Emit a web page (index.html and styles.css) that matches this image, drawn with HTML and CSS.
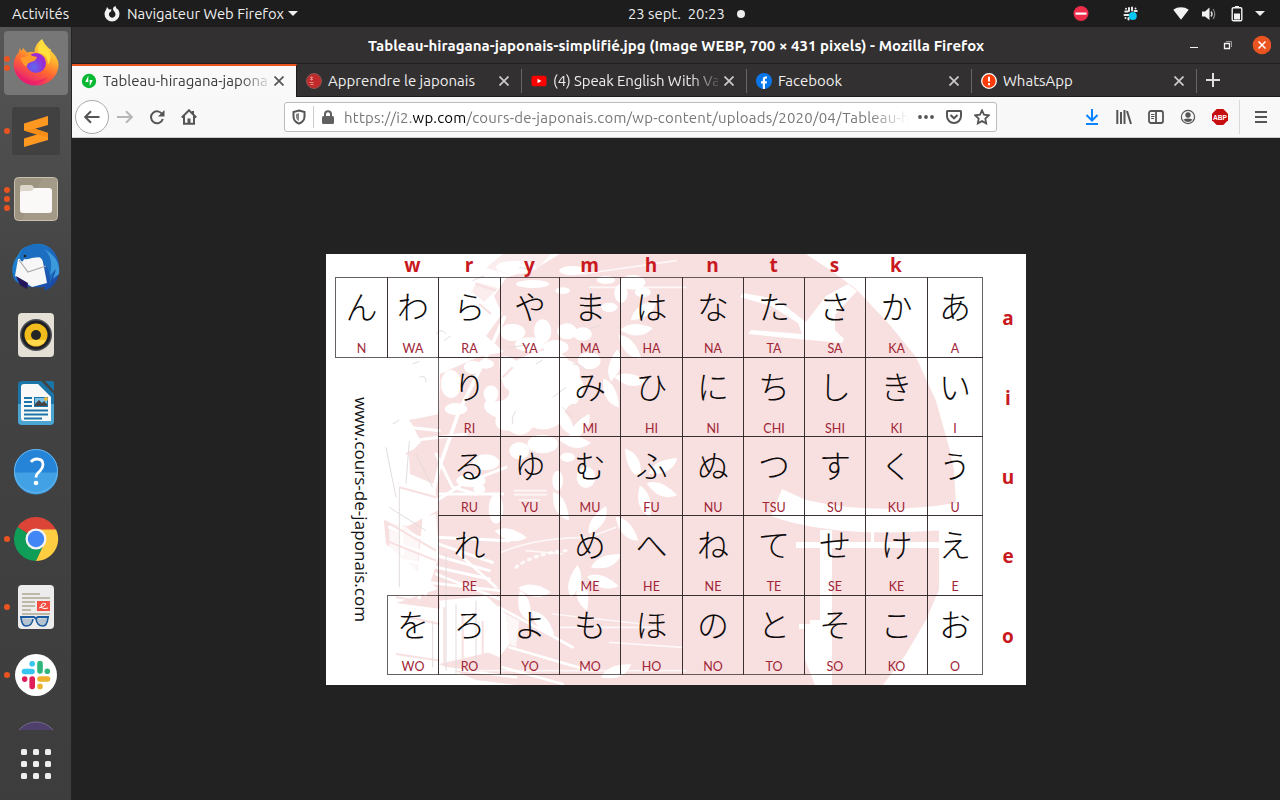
FILE: index.html
```html
<!DOCTYPE html>
<html lang="fr">
<head>
<meta charset="utf-8">
<title>Tableau-hiragana-japonais-simplifié.jpg</title>
<link rel="stylesheet" href="styles.css">
</head>
<body>
<header class="topbar">
  <span class="activities">Activités</span>
  <svg class="appicon" width="16" height="16" viewBox="0 0 16 16"><path d="M3 1 5 3.500 7.500 3.200 7 5.500 5.500 6.500A3.300 3.300 0 1 0 11.200 7C11 5.700 9 5 9 3 9 1.500 10 .5 11.500 0L12.300 2.300C14.500 3.500 15.500 5.500 15.500 8A7.500 7.500 0 0 1 .5 8C.5 5.500 2 4.500 3 1Z" fill="#f2f2f2"/></svg>
  <span class="appname">Navigateur Web Firefox</span>
  <i class="caret"></i>
  <div class="clock"><span class="date">23 sept.&nbsp; 20:23</span><i class="notice"></i></div>
  <div class="tray">
    <svg width="16" height="16" viewBox="0 0 16 16"><circle cx="8" cy="7.500" r="7.500" fill="#ed2c49"/><path d="M2.500 6.500h11v2.200h-11z" fill="#fff"/></svg>
    <svg class="tray-slack" width="16" height="16" viewBox="0 0 16 16"><g stroke="#e7e7e7" stroke-width="2" stroke-linecap="round"><path d="M6 2v3M9 1.500v3M2.200 5.500h2.500M11.500 5h2.300M1.500 9h4M5.500 12v1.500M3 2.700v.1M12.500 2.500v.1M2.500 12v.1"/></g><circle cx="9.800" cy="10" r="4" fill="#08c7f2"/></svg>
    <svg class="tray-wifi" width="16" height="14" viewBox="0 0 16 14"><path d="M.3 2.800C4.500-.5 11.500-.5 15.700 2.800L8 12.700Z" fill="#f2f2f2"/></svg>
    <svg class="tray-sound" width="16" height="16" viewBox="0 0 16 16"><path d="M1 5.500h3L8.500 1.500v12.500L4 10.500H1z" fill="#f2f2f2"/><path d="M10 5.500q2 2.500 0 5" stroke="#ddd" stroke-width="1.400" fill="none"/><path d="M12 3q3.500 5 0 10" stroke="#888" stroke-width="1.200" fill="none"/></svg>
    <svg class="tray-battery" width="12" height="16" viewBox="0 0 12 16"><path d="M4 0h4v2H4z" fill="#f2f2f2"/><rect x="1.200" y="1.700" width="9.600" height="13" rx="1.200" fill="none" stroke="#f2f2f2" stroke-width="1.400"/><path d="M3 7.500h6v6H3z" fill="#f2f2f2"/></svg>
    <i class="caret tray-caret"></i>
  </div>
</header>
<div class="desktop">
<nav class="dock">
  <div class="apps">
    <div class="app current"><span class="run"><i></i><i></i></span>
      <svg width="48" height="48" viewBox="-24 -24 48 48"><defs>
        <linearGradient id="ff" x1=".8" y1="0" x2=".3" y2="1"><stop offset="0" stop-color="#fff44f"/><stop offset=".35" stop-color="#ffb02e"/><stop offset=".62" stop-color="#ff6432"/><stop offset="1" stop-color="#e3177d"/></linearGradient>
        <radialGradient id="ffb" cx=".4" cy=".7"><stop offset="0" stop-color="#5b6cf2"/><stop offset="1" stop-color="#9a2bd4"/></radialGradient></defs>
        <path d="M-13-15-9-10.500Q-4-12-1.500-10.500-2-18 6-24 8-19 13.500-14 15-15 15-12 22.500-5 22.500 2A22.400 20.500 0 0 1-22.400 2Q-22.500-5-17-11L-16.500-15-14.500-12Z" fill="url(#ff)"/>
        <circle cx="0" cy="0" r="10" fill="url(#ffb)"/>
        <path d="M-16-5Q-10-6-7-9-3-6 1-6 0-2-5-1-9 0-9.500 4-13 2-16-5Z" fill="#ff9a2a"/><path d="M3-10Q12-9 12 2 17-6 12-14 8-17 6-22-1-14 3-10Z" fill="#ffdf3e"/><path d="M-21 6Q-8 25 12 14 3 24-10 20-19 15-21 6Z" fill="#ed1c6b" opacity=".7"/></svg></div>
    <div class="app"><span class="run"><i></i></span>
      <svg width="48" height="48" viewBox="-24 -24 48 48"><rect x="-24" y="-24" width="48" height="48" rx="3" fill="#414141"/><path d="M-12-7.500 12-15V-6L-1-2.200 12 2V9L-12 16V7.500L1 3.500-12-.5Z" fill="#ff9820"/><path d="M-1-2.200 12 2V6L1 3.500-12-.5Z" fill="#f58c18"/></svg></div>
    <div class="app"><span class="run"><i></i><i></i><i></i></span>
      <svg width="48" height="48" viewBox="-24 -24 48 48"><rect x="-21.500" y="-21.500" width="43" height="43" rx="4" fill="#9c9480" stroke="#c8c1b0"/><path d="M21-21H6L-14 21H17Q21 21 21 17Z" fill="#a69e8b" opacity=".7"/><rect x="-16" y="-11" width="32" height="25" rx="3" fill="#faf9f7"/><path d="M-16-8v-4q0-2 2-2h9q2 0 3 3-1 3-5 3h-6q-3 0-3 2z" fill="#dcd6ca"/></svg></div>
    <div class="app">
      <svg width="48" height="48" viewBox="-24 -24 48 48"><defs><linearGradient id="tb" x1="0" y1="0" x2="1" y2="1"><stop offset="0" stop-color="#1e94df"/><stop offset="1" stop-color="#1b3e9c"/></linearGradient></defs><path d="M-7-21Q0-25 9-22 17-19 21-10 26 2 21 13 17 21 8 24L9 20Q-15 22-22 12-27 0-18-12Q-15-20-7-21Z" fill="url(#tb)"/><path d="M-18-8 6-10 11 16-4 20-21 9Z" fill="#f7f7f8"/><path d="M-17-7-8 5 10-1" fill="none" stroke="#aaa" stroke-width="1.200"/><path d="M-16-8Q-18-18-6-22 5-25 14-17 20-8 17 8L13 18Q16 4 7-6 3-13-4-9-10-7-12-8-14-3-16-8Z" fill="#1c6fc0"/><path d="M8-18Q18-10 14 8L20 2 17 12 23 7Q25-9 8-18Z" fill="#3c9ada"/><circle cx="-11" cy="-11" r="1.300" fill="#222"/><path d="M-20 9-8 16-9 22-16 18Z" fill="#23165b"/></svg></div>
    <div class="app">
      <svg width="48" height="48" viewBox="-24 -24 48 48"><rect x="-18" y="-22" width="36" height="44" rx="4" fill="#e5e0d5"/><circle r="16" fill="#4e5056"/><circle r="14.500" fill="#202126"/><circle r="11.500" fill="#f2bd1c"/><path d="M-10 5A11.500 11.500 0 0 0 10 5Z" fill="#ffd94b"/><circle r="5" fill="#252525"/></svg></div>
    <div class="app">
      <svg width="48" height="48" viewBox="-24 -24 48 48"><path d="M-14-22H5L18-9V18Q18 22 14 22H-14Q-18 22-18 18V-18Q-18-22-14-22Z" fill="#1b75a8"/><path d="M-18 1H18V18Q18 22 14 22H-14Q-18 22-18 18Z" fill="#4aa5d3"/><path d="M9-22H16Q18-22 18-20V-12Z" fill="#1b75a8"/><path d="M-12-19H2L15-6V18H-12Q-15 18-15 15V-16Q-15-19-12-19Z" fill="#f8f8f8"/><path d="M-12-5h8M-12-1h8M-12 3h8M-12 7.500h24M-12 11.500h24M-12 15.500h18" stroke="#1c75a8" stroke-width="1.800"/><path d="M-2-6h14v10H-2z" fill="#1c75a8"/><path d="M-1-5h12v8H-1z" fill="#7dc1e4"/><path d="M-1 3V1l4-4 3 3 2-2 3 3v2z" fill="#444"/><circle cx="10" cy="-4" r="2" fill="#e6bd42"/></svg></div>
    <div class="app">
      <svg width="48" height="48" viewBox="-24 -24 48 48"><circle r="22" fill="#2584d8"/><path d="M-22 1.500H22A22 22 0 0 1-22 1.500Z" fill="#42a0e4"/><circle r="21.500" fill="none" stroke="#65b6ef"/><path d="M-5-9Q-3-12 1-12 7-12 7-6.500 7-3 4 0 0 3 0 6.500" fill="none" stroke="#fff" stroke-width="2.800"/><circle cy="12" r="2.300" fill="#fff"/></svg></div>
    <div class="app"><span class="run"><i></i></span>
      <svg width="48" height="48" viewBox="-24 -24 48 48"><path d="M0 0-18.500-12A22 22 0 0 1 20-9L21-5Z" fill="#dc4437"/><path d="M-18.500-12A22 22 0 0 0 0 22L8 5Z" fill="#109d58"/><path d="M0 22A22 22 0 0 0 20-9.500H0L8 5Z" fill="#ffcd42"/><circle r="10.500" fill="#f3f3f5"/><circle r="8.200" fill="#4285f4"/></svg></div>
    <div class="app"><span class="run"><i></i></span>
      <svg width="48" height="48" viewBox="-24 -24 48 48"><rect x="-18" y="-22" width="36" height="44" rx="4" fill="#ececec"/><path d="M-14-13H4M-14-9H14M-14-5H-1M-14-1H-1M-14 3H-5M-14 7H14" stroke="#bdb8a8" stroke-width="1.900"/><path d="M1-6h13V4H1z" fill="#f44e42"/><path d="M3 1Q9 0 10-3 7-5 5-2 5 3 12 1" stroke="#fff" fill="none"/><path d="M-16 10H-2Q0 12 2 10H13" fill="none" stroke="#1b5a9e" stroke-width="2"/><path d="M-15 11Q-14 19-10 19-4 19-3 12M12 11Q11 19 7 19 1 19 0 12" fill="#b4c3cf" stroke="#1b5a9e" stroke-width="1.600"/></svg></div>
    <div class="app"><span class="run"><i></i></span>
      <svg width="48" height="48" viewBox="-24 -24 48 48"><circle r="21" fill="#fff"/><g stroke-width="5.600" stroke-linecap="round" fill="none"><path d="M-11.500-3.500H-4M-3.800-11.300v.1" stroke="#36c5f0"/><path d="M4-11.500V-4M11.300-3.800v.1" stroke="#2eb67d"/><path d="M11.500 4H4M4 11.300v.1" stroke="#ecb22e"/><path d="M-3.800 11.500V4M-11.300 4v.1" stroke="#e01e5a"/></g></svg></div>
    <div class="app">
      <svg width="48" height="48" viewBox="-24 -24 48 48"><circle cy="1" r="22" fill="#4f3f6c" stroke="#77698c"/></svg></div>
  </div>
  <div class="launcher"><i></i><i></i><i></i><i></i><i></i><i></i><i></i><i></i><i></i></div>
</nav>
<main class="window">
  <div class="titlebar"><span class="title">Tableau-hiragana-japonais-simplifié.jpg (Image WEBP, 700 × 431 pixels) - Mozilla Firefox</span>
    <svg class="controls" width="90" height="20" viewBox="0 0 90 20"><path d="M9 12.500h8" stroke="#f4f4f4"/><path d="M43.500 8.500h5v5h-5z" fill="none" stroke="#f4f4f4" stroke-width="1.300"/><path d="M45 6.500h5.500V12" fill="none" stroke="#999"/><circle cx="81" cy="10" r="9.300" fill="#e95420"/><path d="m77.500 6.500 7 7m0-7-7 7" stroke="#fff" stroke-width="1.500"/></svg>
  </div>
  <div class="tabs">
    <div class="tab active"><svg class="fav" width="16" height="16" viewBox="0 0 16 16"><circle cx="8" cy="8" r="7.200" fill="#07b932"/><path d="M7.300 2.800V9H4.200ZM8.700 13.200V7h3.100Z" fill="#fff"/></svg><span class="label t1">Tableau-hiragana-japonais</span><svg class="close" width="10" height="10"><path d="m.5.5 9 9m0-9-9 9"/></svg></div>
    <div class="tab"><svg class="fav" width="16" height="16" viewBox="0 0 16 16"><circle cx="8" cy="8" r="7.500" fill="#c02a2b" stroke="#855"/><path d="M4 4.500h3m-3 2h3M5.500 3.500v4m-2 2h4m-3 2h3" stroke="#e58a85"/></svg><span class="label t2">Apprendre le japonais</span><svg class="close" width="10" height="10"><path d="m.5.5 9 9m0-9-9 9"/></svg></div>
    <div class="tab"><svg class="fav" width="16" height="16" viewBox="0 0 16 16"><rect x=".5" y="2.700" width="15" height="10.600" rx="2.500" fill="#f00"/><path d="M6.500 5.800v4.400l4-2.200z" fill="#fff"/></svg><span class="label t3">(4) Speak English With Vanessa</span><svg class="close" width="10" height="10"><path d="m.5.5 9 9m0-9-9 9"/></svg></div>
    <div class="tab"><svg class="fav" width="16" height="16" viewBox="0 0 16 16"><circle cx="8" cy="8" r="8" fill="#0877ea"/><path d="M6.800 16v-5.500H5V8.200h1.800V6.500C6.800 4.300 8 3.500 9.600 3.500l1.400.1v2h-.9C9.200 5.600 9 6.100 9 6.700v1.500h2l-.4 2.300H9V16Z" fill="#fff"/></svg><span class="label t4">Facebook</span><svg class="close" width="10" height="10"><path d="m.5.5 9 9m0-9-9 9"/></svg></div>
    <div class="tab"><svg class="fav" width="16" height="16" viewBox="0 0 16 16"><circle cx="8" cy="8" r="7.300" fill="#ff3b08" stroke="#fff" stroke-width="1.300"/><path d="M8 3.700v4.800m0 1.500v2.200" stroke="#fff" stroke-width="2"/></svg><span class="label t5">WhatsApp</span><svg class="close" width="10" height="10"><path d="m.5.5 9 9m0-9-9 9"/></svg></div>
    <svg class="newtab" width="14" height="14"><path d="M7 0v14M0 7h14" stroke="#e0e0e0" stroke-width="2"/></svg>
  </div>
  <div class="toolbar">
    <span class="back"><svg width="16" height="16" viewBox="0 0 16 16"><path d="M15.500 8H1.500M7 2.200 1.200 8 7 13.800" class="ln"/></svg></span>
    <svg class="forward" width="16" height="16" viewBox="0 0 16 16"><path d="M0 8h14.500M9 2.200 14.800 8 9 13.800" class="ln"/></svg>
    <svg class="reload" width="16" height="16" viewBox="0 0 16 16"><path d="M13.300 5.400A6 6 0 1 0 13.800 10" class="ln"/><path d="M15.500 1v6.500H9Z" fill="#555"/></svg>
    <svg class="home" width="16" height="16" viewBox="0 0 16 16"><path d="M.8 8.500 8 1.300l7.200 7.200M3 7v7.800h10V7M12 2v3" class="ln"/><path d="M6.500 14.500V9.500h3v5" fill="#555"/></svg>
    <div class="urlbar">
      <svg class="shield" width="14" height="16" viewBox="0 0 14 16"><path d="M7 1.500 12.500 3v4.500Q12.500 12.500 7 14.600 1.500 12.500 1.500 7.500V3Z" class="ln"/><path d="M7 4v8Q4 10.500 4 7.500V5Z" fill="#666" opacity=".8"/></svg>
      <i class="rule"></i>
      <svg class="lock" width="12" height="14" viewBox="0 0 12 14"><path d="M3 7V4.200a3 3 0 0 1 6 0V7" fill="none" stroke="#606060" stroke-width="2"/><rect y="6" width="12" height="8" rx="1.500" fill="#606060"/></svg>
      <span class="url">https://i2.<b>wp.com</b>/cours-de-japonais.com/wp-content/uploads/2020/04/Tableau-hiragana</span>
      <svg class="dots" width="16" height="4"><circle cx="2" cy="2" r="1.900"/><circle cx="8" cy="2" r="1.900"/><circle cx="14" cy="2" r="1.900"/></svg>
      <svg class="pocket" width="16" height="16" viewBox="0 0 16 16"><path d="M1.500 2h13q.5 0 .5.500V7a7 7 0 0 1-14 0V2.500Q1 2 1.500 2ZM4.500 6 8 9.300 11.500 6" class="ln"/></svg>
      <svg class="star" width="16" height="16" viewBox="0 0 16 16"><path d="m8 1.400 2 4.300 4.800.6-3.500 3.300.9 4.800L8 12.100l-4.200 2.300.9-4.800L1.200 6.300 6 5.700Z" class="ln thin"/></svg>
    </div>
    <div class="actions">
      <svg width="16" height="16" viewBox="0 0 16 16"><path d="M8 0v11M2.500 6 8 11.500 13.500 6M2 15h12" class="ln blue"/></svg>
      <svg width="16" height="16" viewBox="0 0 16 16"><path d="M1.300 1v14M5 3v12M8.500 1v14M11 2l4 13" class="ln"/></svg>
      <svg width="16" height="16" viewBox="0 0 16 16"><rect x="1" y="2" width="14" height="12" rx="2" class="ln thin"/><path d="M8 2v12" class="ln thin"/><path d="M3 5.500h3.500M3 7.500h3.500M3 9.500h3" stroke="#555" fill="none"/></svg>
      <svg width="16" height="16" viewBox="0 0 16 16"><circle cx="8" cy="8" r="6.600" fill="none" stroke="#555" stroke-width="1.200"/><circle cx="8" cy="6" r="2.700" fill="#555"/><path d="M3.500 10.500Q8 8.500 12.500 10.500 11 13 8 13T3.500 10.500Z" fill="#555"/></svg>
      <svg width="16" height="16" viewBox="0 0 16 16"><path d="M4.700 0h6.600L16 4.700v6.600L11.300 16H4.700L0 11.300V4.700Z" fill="#c70d10"/><text x="8" y="11" class="abp" textLength="14" lengthAdjust="spacingAndGlyphs">ABP</text></svg>
      <i class="rule tall"></i>
      <svg class="menu" width="12" height="12"><path d="M0 1h12M0 6h12M0 11h12" class="ln"/></svg>
    </div>
  </div>
  <section class="viewer">
    <div class="picture">
      <svg class="art" width="700" height="431" viewBox="0 0 700 431">
        <defs><path id="leaf" d="M-16 0Q-5-11 17-2 4 12-16 0Z"/></defs>
        <path d="M234 0H480L507 18 530 35 563 70 590 103 610 147 623 193 628 216 630 250 613 253V336L600 366 580 400 557 431H190L150 426 113 410 178 395 160 350 115 355 70 349 112 335 85 312 60 290 58 268 82 272 113 256 108 230 84 220 83 200 95 188 84 166 113 160 114 120 152 103 178 98 160 82 176 60 168 42 180 24 214 12Z" fill="#f8dfe0"/>
        <path d="M177 0H225L210 16 190 9 182 20 160 14ZM150 28 172 34 158 48 146 38Z" fill="#fbeced"/>
        <g fill="#fff">
          <path d="M480 68 500 42 522 30 531 37 509 61 509 76 518 85 516 89 472 85 422 80 425 76 476 80 472 69 445 52 414 43 417 39 450 45Z"/>
          <path d="M456 235 480 246Q550 262 630 249V275Q510 286 445 262Z"/>
          <path d="M494 276h12v155h-17l-11-28v-28h-5v-5h11v-4h10zM470 288h144v6H470zM545 266h3v24h-3z"/>
        </g>
        <g transform="translate(50) scale(.3333)">
          <g fill="#fff">
            <path d="M370 310Q400 300 420 320L460 300Q540 270 580 320 620 330 610 370 640 400 600 450 570 445 560 500 520 540 470 520 440 560 400 530 350 530 360 490 310 470 330 440 400 450 400 410 370 400 370 310Z"/>
            <ellipse cx="500" cy="232" rx="26" ry="36"/><ellipse cx="573" cy="232" rx="30" ry="24"/><ellipse cx="620" cy="240" rx="28" ry="20"/><ellipse cx="462" cy="272" rx="45" ry="22"/><ellipse cx="540" cy="280" rx="38" ry="22"/><ellipse cx="640" cy="320" rx="34" ry="26"/>
            <ellipse cx="330" cy="330" rx="24" ry="14"/><ellipse cx="398" cy="372" rx="22" ry="18"/><ellipse cx="345" cy="420" rx="22" ry="26"/><ellipse cx="225" cy="390" rx="30" ry="42"/><ellipse cx="290" cy="340" rx="26" ry="20"/><ellipse cx="240" cy="465" rx="34" ry="18"/>
            <ellipse cx="770" cy="85" rx="38" ry="22"/><ellipse cx="735" cy="118" rx="20" ry="28"/><ellipse cx="800" cy="115" rx="24" ry="15"/><ellipse cx="690" cy="78" rx="28" ry="12"/><ellipse cx="700" cy="160" rx="24" ry="14"/><ellipse cx="470" cy="90" rx="50" ry="12"/><ellipse cx="590" cy="50" rx="40" ry="14"/><ellipse cx="420" cy="40" rx="60" ry="20"/><ellipse cx="410" cy="235" rx="38" ry="26"/><ellipse cx="560" cy="110" rx="22" ry="10"/>
            <ellipse cx="330" cy="625" rx="40" ry="24"/><ellipse cx="285" cy="680" rx="44" ry="20"/><ellipse cx="500" cy="570" rx="46" ry="28"/><ellipse cx="430" cy="590" rx="30" ry="26"/><ellipse cx="360" cy="765" rx="22" ry="44"/><ellipse cx="310" cy="705" rx="18" ry="14"/><ellipse cx="545" cy="680" rx="16" ry="30"/><ellipse cx="630" cy="670" rx="28" ry="32"/><ellipse cx="575" cy="610" rx="22" ry="14"/>
            <path d="M190 1040 330 1025 390 1080 400 1170 370 1210 300 1180 210 1200ZM140 790 180 780 190 900 150 1030 120 1000Z"/>
            <path d="M390 1080 430 1100 420 1180 400 1170ZM40 780 130 850 120 1010 40 890Z" opacity=".75"/>
          </g>
          <g stroke="#fff" fill="none" stroke-linecap="round">
            <path d="M385 190 340 290 250 470 190 640 150 800 130 1030" stroke-width="11"/>
            <path d="M30 560 100 680 150 760 260 690 390 640M60 640 80 900M180 600 230 700 300 720" stroke-width="9"/>
            <path d="M40 820 350 925M60 870 340 950M90 920 340 975M110 980 370 1010M190 720 380 720M100 520 190 530M105 560 270 540M180 850 400 860" stroke-width="9"/>
            <path d="M180 960 370 1035M250 900 360 1000M370 1060 590 1180M400 1180 640 1250M190 1240 420 1270M380 1240 560 1290" stroke-width="8"/>
            <path d="M376 895Q480 850 640 850L720 820M530 1080 800 1110M550 1120H850M700 1165 920 1180M640 100H930M620 60 900 20M450 890 560 900M415 710H510M415 722H512M430 738H490M290 1250H930" stroke-width="5" opacity=".75"/>
            <path d="M420 940Q470 900 570 890" stroke-width="10" stroke-dasharray="6 16" opacity=".8"/>
          </g>
          <g stroke="#f8dfe0" fill="none" stroke-width="6">
            <path d="M100 500H190M90 600 180 560M70 700 180 730M25 800 180 890M30 860 180 920M60 1030 190 1050M100 1090 190 1110M60 1200 190 1220M205 1060V1230M260 1080V1240M320 1100V1240M410 340 380 370M300 90 360 110M310 150 345 180"/>
          </g>
          <g stroke="#e3dcdd" fill="none" stroke-width="3">
            <path d="M130 370q20-10 20 15M180 240q15-20 30 0M205 260l20-15M100 560 90 690M30 580 60 730M120 600 170 700M40 760 150 830M70 700V1000M210 900V1250M240 1050V1260M300 1040V1250M170 1100V1240M400 280l60-8M420 470q-15 20-10 40M530 430l40-30M590 330q30 0 40 20M480 330l20-12M560 460l30 30M640 225l30-10M290 80l35-15M110 330l20-8M50 510l20-12M430 40l40 8"/>
          </g>
        </g>
        <g fill="#fff">
          <use href="#leaf" transform="translate(310 76)"/><use href="#leaf" transform="translate(318 57) rotate(-35)"/><use href="#leaf" transform="translate(303 93) rotate(50)"/><use href="#leaf" transform="translate(289 112) rotate(-75)"/><use href="#leaf" transform="translate(304 126) rotate(10)"/><use href="#leaf" transform="translate(284 139) rotate(65)"/><use href="#leaf" transform="translate(239 168) rotate(60)"/><use href="#leaf" transform="translate(254 174) rotate(-50)"/><use href="#leaf" transform="translate(248 188) rotate(10)"/><use href="#leaf" transform="translate(308 209) rotate(-115)"/><use href="#leaf" transform="translate(337 213) rotate(-25)"/><use href="#leaf" transform="translate(335 236) rotate(25)"/><use href="#leaf" transform="translate(318 247) rotate(75)"/><use href="#leaf" transform="translate(300 275) rotate(50)"/><use href="#leaf" transform="translate(272 267) rotate(-55)"/><use href="#leaf" transform="translate(280 308) rotate(-20)"/><use href="#leaf" transform="translate(276 328) rotate(20)"/><use href="#leaf" transform="translate(249 328) rotate(-75)"/><use href="#leaf" transform="translate(256 340) rotate(80)"/><use href="#leaf" transform="translate(184 281) rotate(15)"/><use href="#leaf" transform="translate(208 337) rotate(10)"/><use href="#leaf" transform="translate(198 352) rotate(75)"/><use href="#leaf" transform="translate(234 252) rotate(65)"/><use href="#leaf" transform="translate(216 369) rotate(50)"/><use href="#leaf" transform="translate(290 418) rotate(-20)"/>
        </g>
      </svg>
      <div class="heads"><span></span><span>w</span><span>r</span><span>y</span><span>m</span><span>h</span><span>n</span><span>t</span><span>s</span><span>k</span><span></span></div>
      <div class="kana">
        <div class="cell"><b>ん</b><em>N</em></div><div class="cell"><b>わ</b><em>WA</em></div><div class="cell"><b>ら</b><em>RA</em></div><div class="cell"><b>や</b><em>YA</em></div><div class="cell"><b>ま</b><em>MA</em></div><div class="cell"><b>は</b><em>HA</em></div><div class="cell"><b>な</b><em>NA</em></div><div class="cell"><b>た</b><em>TA</em></div><div class="cell"><b>さ</b><em>SA</em></div><div class="cell"><b>か</b><em>KA</em></div><div class="cell"><b>あ</b><em>A</em></div>
        <div class="site">www.cours-de-japonais.com</div><div class="gap"></div><div class="cell"><b>り</b><em>RI</em></div><div class="cell"></div><div class="cell"><b>み</b><em>MI</em></div><div class="cell"><b>ひ</b><em>HI</em></div><div class="cell"><b>に</b><em>NI</em></div><div class="cell"><b>ち</b><em>CHI</em></div><div class="cell"><b>し</b><em>SHI</em></div><div class="cell"><b>き</b><em>KI</em></div><div class="cell"><b>い</b><em>I</em></div>
        <div class="cell"><b>る</b><em>RU</em></div><div class="cell"><b>ゆ</b><em>YU</em></div><div class="cell"><b>む</b><em>MU</em></div><div class="cell"><b>ふ</b><em>FU</em></div><div class="cell"><b>ぬ</b><em>NU</em></div><div class="cell"><b>つ</b><em>TSU</em></div><div class="cell"><b>す</b><em>SU</em></div><div class="cell"><b>く</b><em>KU</em></div><div class="cell"><b>う</b><em>U</em></div>
        <div class="cell"><b>れ</b><em>RE</em></div><div class="cell"></div><div class="cell"><b>め</b><em>ME</em></div><div class="cell"><b>へ</b><em>HE</em></div><div class="cell"><b>ね</b><em>NE</em></div><div class="cell"><b>て</b><em>TE</em></div><div class="cell"><b>せ</b><em>SE</em></div><div class="cell"><b>け</b><em>KE</em></div><div class="cell"><b>え</b><em>E</em></div>
        <div class="cell"><b>を</b><em>WO</em></div><div class="cell"><b>ろ</b><em>RO</em></div><div class="cell"><b>よ</b><em>YO</em></div><div class="cell"><b>も</b><em>MO</em></div><div class="cell"><b>ほ</b><em>HO</em></div><div class="cell"><b>の</b><em>NO</em></div><div class="cell"><b>と</b><em>TO</em></div><div class="cell"><b>そ</b><em>SO</em></div><div class="cell"><b>こ</b><em>KO</em></div><div class="cell"><b>お</b><em>O</em></div>
      </div>
      <div class="vowels"><span>a</span><span>i</span><span>u</span><span>e</span><span>o</span></div>
    </div>
  </section>
</main>
</div>
</body>
</html>
```
FILE: styles.css
```css
* { box-sizing: border-box; }
body { margin: 0; width: 1280px; height: 800px; overflow: hidden; display: flex; flex-direction: column; font: 15px/20px Ubuntu, "Noto Sans", sans-serif; background: #222; color: #eee; }
svg { display: block; flex: none; }
i { display: block; flex: none; }
span { white-space: nowrap; }
.topbar { flex: none; height: 27px; background: #1d1d1d; display: flex; align-items: center; padding-left: 12px; font-size: 14.8px; }
.activities { width: 92px; }
.appicon { margin-right: 7px; }
.appname { width: 161px; }
.caret { width: 0; height: 0; border: 5px solid transparent; border-top-color: #eee; border-bottom: 0; }
.clock { display: flex; align-items: center; margin-left: 330px; width: 117px; }
.date { width: 109px; }
.notice { width: 8px; height: 8px; border-radius: 50%; background: #eee; }
.tray { display: flex; align-items: center; margin-left: 328px; }
.tray-slack { margin-left: 34px; }
.tray-wifi { margin-left: 34px; }
.tray-sound { margin-left: 12px; }
.tray-battery { margin-left: 14px; }
.tray-caret { margin-left: 12px; }

.desktop { display: flex; flex: 1; min-height: 0; }
.dock { width: 72px; flex: none; background: linear-gradient(#565656, #434343 35%, #3d3d3d); border-right: 1px solid #242424; }
.apps { height: 703px; overflow: hidden; padding-top: 2px; }
.app { height: 64px; width: 64px; margin: 2px 4px 4px; display: flex; align-items: center; justify-content: center; position: relative; border-radius: 4px; }
.current { background: #777; }
.run { position: absolute; left: 0; top: 0; height: 64px; display: flex; flex-direction: column; justify-content: center; gap: 3px; }
.run i { width: 6px; height: 6px; border-radius: 50%; background: #e95420; }
.launcher { display: grid; grid-template-columns: repeat(3, 6px); gap: 6px; margin: 19px 0 0 21px; }
.launcher i { width: 6px; height: 6px; border-radius: 1.5px; background: #eee; }

.window { flex: 1; min-width: 0; display: flex; flex-direction: column; }
.titlebar { height: 37px; background: #333031; border-bottom: 1px solid #211f20; display: flex; align-items: center; }
.title { width: 616px; margin-left: 296px; padding-top: 2px; font-weight: 700; letter-spacing: .035px; color: #fff; }
.controls { margin-left: 197px; }
.tabs { height: 33px; background: #333031; display: flex; align-items: stretch; border-bottom: 1px solid #1d1b1c; }
.tab { width: 225px; display: flex; align-items: center; padding: 2px 12px 0 9px; position: relative; }
.tab:not(.active)::after { content: ""; position: absolute; right: 0; top: 5px; height: 24px; width: 1px; background: #666; }
.active { background: #f9f9fa; color: #3b3b3b; border-top: 2px solid #e95420; border-right: 1px solid #1d1b1c; margin-bottom: -1px; padding: 0 11px 1px 9px; }
.label { width: 165px; margin: 0 6px; overflow: hidden; flex: none; }
.t1, .t3 { -webkit-mask-image: linear-gradient(90deg, #000 83%, transparent 103%); mask-image: linear-gradient(90deg, #000 83%, transparent 103%); }
.t3 { letter-spacing: -.1px; }
.close path { stroke: #ccc; stroke-width: 1.7; }
.active .close path { stroke: #555; }
.newtab { margin: 9px 0 0 9px; }
.toolbar { height: 41px; background: #f8f8f8; border-bottom: 1px solid #ccc; display: flex; align-items: center; padding-left: 3px; }
.ln { stroke: #555; stroke-width: 2; fill: none; }
.thin { stroke-width: 1.8; }
.blue { stroke: #0a84ff; }
.back { width: 34px; height: 34px; border: 1px solid #aaa; border-radius: 50%; background: #fff; display: flex; align-items: center; justify-content: center; }
.forward { margin-left: 8px; opacity: .4; }
.reload, .home { margin-left: 16px; }
.urlbar { width: 713px; height: 30px; margin-left: 87px; border: 1px solid #bcbcbc; border-radius: 3px; background: #fff; display: flex; align-items: center; }
.shield { margin-left: 7px; }
.rule { width: 1px; height: 22px; background: #ccc; margin-left: 7px; }
.lock { margin-left: 8px; }
.url { width: 565px; margin: 1px 0 0 10px; overflow: hidden; letter-spacing: .22px; color: #777; -webkit-mask-image: linear-gradient(90deg, #000 93%, transparent); mask-image: linear-gradient(90deg, #000 93%, transparent); }
.url b { font-weight: 400; color: #000; }
.dots { margin-left: 9px; fill: #555; }
.pocket { margin-left: 12px; }
.star { margin-left: 12px; }
.actions { display: flex; align-items: center; gap: 16px; margin-left: 87px; }
.tall { height: 34px; margin-left: -5px; background: #d8d8d8; }
.menu { margin-left: -1px; }
.abp { font: 700 8px "Liberation Sans", sans-serif; fill: #fff; text-anchor: middle; }
.viewer { flex: 1; padding: 116px 0 0 254px; background: #222; }

.picture { width: 700px; height: 431px; background: #fff; position: relative; display: grid; grid-template-columns: 648px 1fr; grid-template-rows: 23px 398px; padding-left: 9px; }
.art { position: absolute; left: 0; top: 0; }
.heads, .kana { display: grid; grid-template-columns: 52px 51px 62px 59px 61px 62px 61px 61px 61px 62px 55px; position: relative; }
.heads { grid-column: 1 / 3; font: 700 19px/22px "Open Sans", sans-serif; color: #c9191e; text-align: center; }
.kana { grid-template-rows: 80px 79px 79px 80px 79px; }
.cell { margin: 0 -1px -1px 0; border: 1px solid rgba(40, 30, 32, .7); display: flex; flex-direction: column; align-items: center; padding-top: 5px; }
.cell b { font: 300 32px/44px "Noto Sans CJK JP", sans-serif; color: #0d0b0b; }
.cell em { font: 400 12.5px/16px Lato, sans-serif; color: #a02535; margin-top: 14px; }
.site { grid-row: 2 / 6; grid-column: 1; writing-mode: vertical-rl; font: 17.1px/24px "Open Sans", sans-serif; color: #111; padding: 40px 0 0 14px; justify-self: start; white-space: nowrap; }
.gap { grid-row: 2 / 5; grid-column: 2; }
.vowels { position: relative; display: grid; grid-template-rows: 80px 79px 79px 80px 79px; font: 700 19px/82px "Open Sans", sans-serif; color: #c9191e; text-align: center; padding-left: 7px; }
```
